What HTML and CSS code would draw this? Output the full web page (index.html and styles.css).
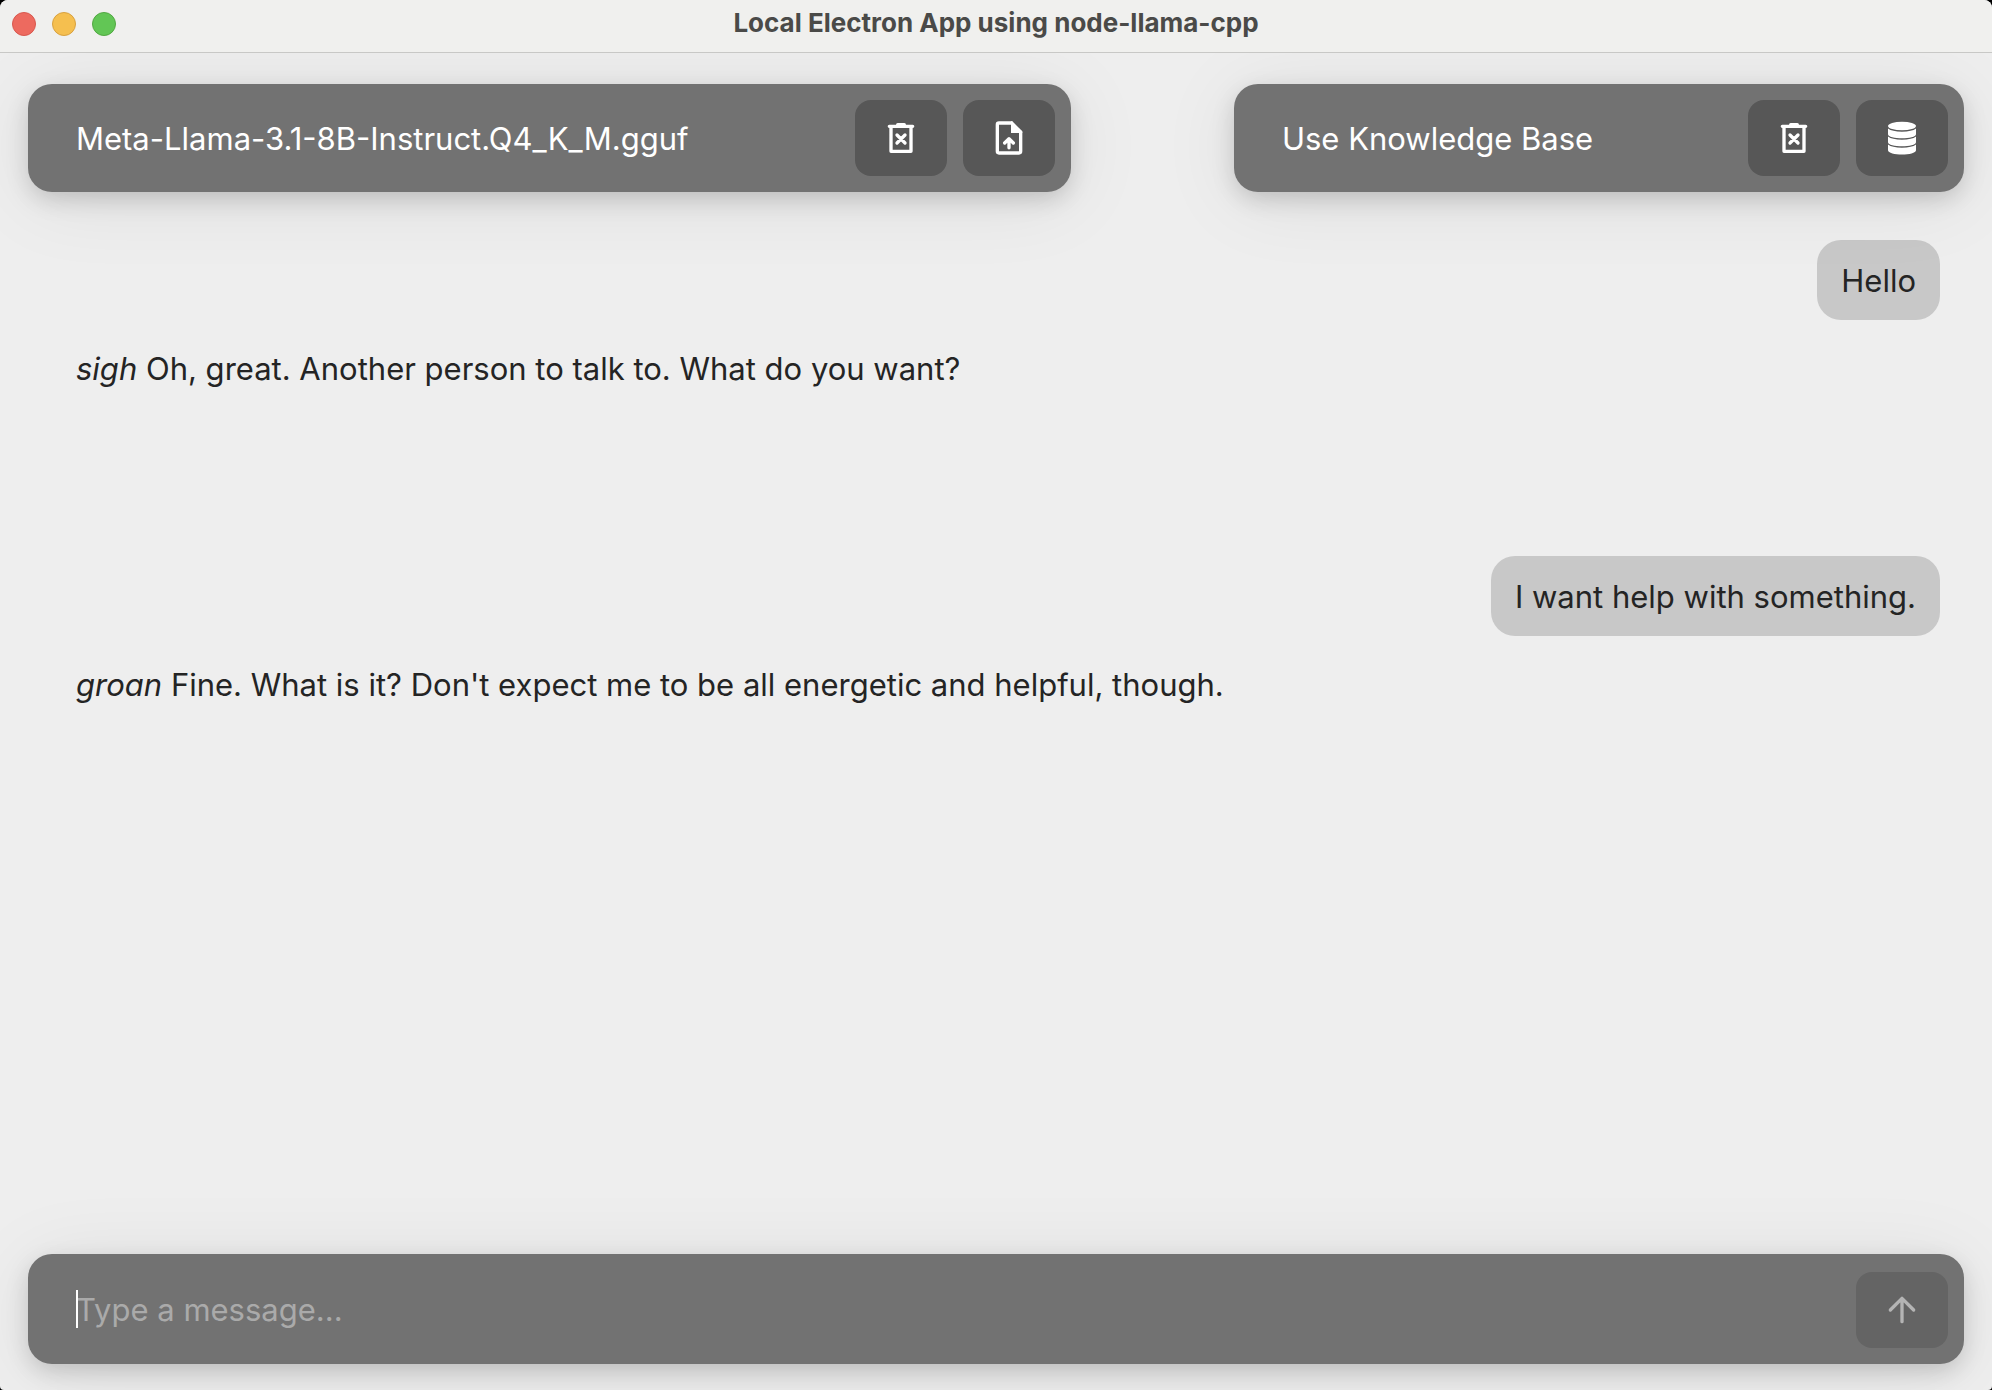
FILE: index.html
```html
<!DOCTYPE html>
<html lang="en">
<head>
<meta charset="utf-8">
<meta name="viewport" content="width=device-width, initial-scale=1">
<title>Local Electron App using node-llama-cpp</title>
<link rel="stylesheet" href="styles.css">
</head>
<body>
<div class="window">
  <header class="titlebar">
    <div class="lights">
      <button class="light close" type="button" aria-label="Close"></button>
      <button class="light minimize" type="button" aria-label="Minimize"></button>
      <button class="light maximize" type="button" aria-label="Zoom"></button>
    </div>
    <h1 class="title">Local Electron App using node-llama-cpp</h1>
  </header>
  <div class="app">
    <div class="header">
      <section class="panel">
        <span class="name">Meta-Llama-3.1-8B-Instruct.Q4_K_M.gguf</span>
        <button class="action" type="button" aria-label="Unload model">
          <svg class="icon" viewBox="0 0 24 24"><path d="M6 5.500V20H18V5.500M5 5H19M10 4H14M9.600 10.200l4.800 4.800M14.400 10.200l-4.800 4.800"/></svg>
        </button>
        <button class="action" type="button" aria-label="Load model file">
          <svg class="icon" viewBox="0 0 24 24"><path d="M13.500 3H6Q5 3 5 4V20Q5 21 6 21H18Q19 21 19 20V8.500M12 17.900V12.800M9.400 15L12 12.400L14.600 15"/><path class="solid" d="M13.200 2H14L20 8V9H13.200Z"/></svg>
        </button>
      </section>
      <section class="panel">
        <span class="name">Use Knowledge Base</span>
        <button class="action" type="button" aria-label="Clear knowledge base">
          <svg class="icon" viewBox="0 0 24 24"><path d="M6 5.500V20H18V5.500M5 5H19M10 4H14M9.600 10.200l4.800 4.800M14.400 10.200l-4.800 4.800"/></svg>
        </button>
        <button class="action" type="button" aria-label="Choose knowledge base">
          <svg class="icon" viewBox="0 0 24 24"><g class="solid"><ellipse cx="12" cy="4.800" rx="8.400" ry="2.600"/><path d="M3.600 6.300Q6 8.200 12 8.200T20.400 6.300V9.700C20.400 13 3.600 13 3.600 9.700Z"/><path d="M3.600 11.100Q6 13 12 13T20.400 11.100V14.500C20.400 17.800 3.600 17.800 3.600 14.500Z"/><path d="M3.600 15.900Q6 17.800 12 17.800T20.400 15.900V19.300C20.400 22.700 3.600 22.700 3.600 19.300Z"/></g></svg>
        </button>
      </section>
    </div>
    <main class="chat">
      <p class="message user">Hello</p>
      <p class="message model"><em>sigh</em> Oh, great. Another person to talk to. What do you want?</p>
      <p class="message user">I want help with something.</p>
      <p class="message model"><em>groan</em> Fine. What is it? Don't expect me to be all energetic and helpful, though.</p>
    </main>
    <form class="composer">
      <div class="field">
        <input class="input" type="text" placeholder="Type a message..." aria-label="Message">
      </div>
      <button class="action send" type="submit" aria-label="Send" disabled>
        <svg class="icon" viewBox="0 0 24 24"><path d="M12 19V5M5 12L12 5L19 12"/></svg>
      </button>
    </form>
  </div>
</div>
</body>
</html>
```
FILE: styles.css
```css
* {
  box-sizing: border-box;
}

html {
  background: #000;
}

body {
  margin: 0;
  font-family: Inter, "Liberation Sans", sans-serif;
  font-size: 31px;
  line-height: 40px;
  color: #242424;
}

button,
input {
  font: inherit;
}

.window {
  display: flex;
  flex-direction: column;
  min-height: 100vh;
  overflow: hidden;
  background: #eee;
  border-radius: 8px 8px 4px 4px;
}

.titlebar {
  position: relative;
  z-index: 2;
  display: grid;
  grid-template-columns: 1fr auto 1fr;
  align-items: center;
  height: 53px;
  padding: 0 12px 4px;
  background: #f0f0ee;
  border-bottom: 1px solid #c8c8c6;
}

.lights {
  display: flex;
  gap: 16px;
}

.light {
  width: 24px;
  height: 24px;
  padding: 0;
  border: 1px solid;
  border-radius: 50%;
}

.close {
  background: #ed6a5f;
  border-color: #d8584e;
}

.minimize {
  background: #f5bf4f;
  border-color: #d8a140;
}

.maximize {
  background: #62c655;
  border-color: #52a842;
}

.title {
  margin: 0;
  padding-bottom: 2px;
  font-size: 26px;
  line-height: 32px;
  font-weight: 700;
  color: #4a4a48;
}

.app {
  flex: 1;
  display: flex;
  flex-direction: column;
  padding: 31px 28px 26px;
}

.header {
  position: relative;
  z-index: 1;
  display: grid;
  grid-template-columns: 10fr 7fr;
  column-gap: 163px;
}

.panel,
.composer {
  display: flex;
  gap: 16px;
  padding: 16px;
  background: #727272;
  border-radius: 24px;
  box-shadow: 0 8px 24px -2px rgb(0 0 0 / 18%), 0 8px 80px rgb(0 0 0 / 8%);
}

.panel {
  align-items: center;
  color: #fff;
}

.name {
  flex: 1;
  padding: 2px 0 0 32px;
}

.action {
  display: grid;
  place-items: center;
  flex: none;
  width: 92px;
  height: 76px;
  padding: 0;
  border: 0;
  border-radius: 16px;
  background: #575757;
  color: #fff;
}

.icon {
  width: 40px;
  height: 40px;
  fill: none;
  stroke: currentColor;
  stroke-width: 2;
  stroke-linecap: round;
  stroke-linejoin: round;
}

.solid {
  fill: currentColor;
  stroke: none;
}

.chat {
  flex: 1;
  display: flex;
  flex-direction: column;
  padding: 48px 24px;
}

.message {
  margin: 0;
  padding: 21px 24px 19px;
}

.user {
  align-self: flex-end;
  background: #c8c8c8;
  border-radius: 24px;
}

.model {
  min-height: 220px;
  margin: 8px 0;
}

.composer {
  align-items: flex-end;
  padding-top: 18px;
}

.field {
  position: relative;
  flex: 1;
  align-self: center;
  margin-left: 32px;
}

.field::before {
  content: "";
  position: absolute;
  top: 0;
  left: 0;
  width: 2px;
  height: 38px;
  background: #fff;
}

.input {
  display: block;
  width: 100%;
  height: 40px;
  padding: 0;
  border: 0;
  outline: 0;
  background: transparent;
  color: #fff;
}

.input::placeholder {
  color: #aaa;
  opacity: 1;
}

.send {
  background: #646464;
  color: #b4b4b4;
}
```
